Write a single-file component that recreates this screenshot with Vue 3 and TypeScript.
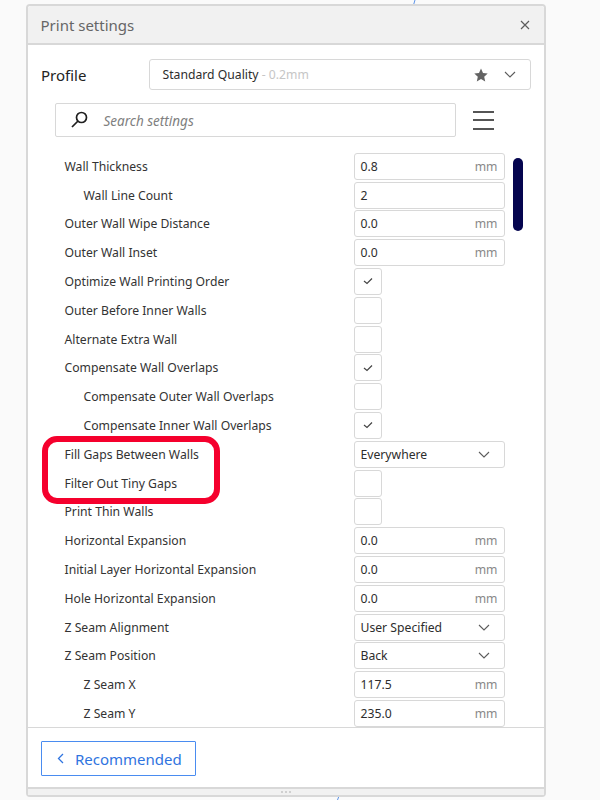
<script setup lang="ts">
interface Row {
  label: string
  indent?: boolean
  kind: 'num' | 'plain' | 'check' | 'select'
  value?: string
  checked?: boolean
}
const rows: Row[] = [
  { label: 'Wall Thickness', kind: 'num', value: '0.8' },
  { label: 'Wall Line Count', indent: true, kind: 'plain', value: '2' },
  { label: 'Outer Wall Wipe Distance', kind: 'num', value: '0.0' },
  { label: 'Outer Wall Inset', kind: 'num', value: '0.0' },
  { label: 'Optimize Wall Printing Order', kind: 'check', checked: true },
  { label: 'Outer Before Inner Walls', kind: 'check' },
  { label: 'Alternate Extra Wall', kind: 'check' },
  { label: 'Compensate Wall Overlaps', kind: 'check', checked: true },
  { label: 'Compensate Outer Wall Overlaps', indent: true, kind: 'check' },
  { label: 'Compensate Inner Wall Overlaps', indent: true, kind: 'check', checked: true },
  { label: 'Fill Gaps Between Walls', kind: 'select', value: 'Everywhere' },
  { label: 'Filter Out Tiny Gaps', kind: 'check' },
  { label: 'Print Thin Walls', kind: 'check' },
  { label: 'Horizontal Expansion', kind: 'num', value: '0.0' },
  { label: 'Initial Layer Horizontal Expansion', kind: 'num', value: '0.0' },
  { label: 'Hole Horizontal Expansion', kind: 'num', value: '0.0' },
  { label: 'Z Seam Alignment', kind: 'select', value: 'User Specified' },
  { label: 'Z Seam Position', kind: 'select', value: 'Back' },
  { label: 'Z Seam X', indent: true, kind: 'num', value: '117.5' },
  { label: 'Z Seam Y', indent: true, kind: 'num', value: '235.0' },
]
</script>

<template>
  <div class="page">
    <svg class="wire" width="600" height="800" viewBox="0 0 600 800">
      <path d="M415 0 L413.500 5" />
      <path d="M339 796 L337.500 800" />
    </svg>
    <section class="panel">
      <header class="head">
        <h1>Print settings</h1>
        <svg width="10" height="10" viewBox="0 0 10 10" class="close">
          <path d="M1 1 L9 9 M9 1 L1 9" />
        </svg>
      </header>

      <div class="body">
        <div class="profile">
          <span class="profile-label">Profile</span>
          <div class="profile-box">
            <span class="profile-name">Standard Quality</span>
            <span class="profile-sub">&nbsp;- 0.2mm</span>
            <svg class="star" width="14" height="14" viewBox="0 0 14 14">
              <path d="M7 .6 L9 5 L13.700 5.500 L10.200 8.700 L11.200 13.400 L7 11 L2.800 13.400 L3.800 8.700 L.3 5.500 L5 5 Z" />
            </svg>
            <svg class="chev" width="12" height="7" viewBox="0 0 12 7">
              <path d="M1 1 L6 6 L11 1" />
            </svg>
          </div>
        </div>

        <div class="search">
          <div class="search-box">
            <svg width="20" height="20" viewBox="0 0 20 20" class="lens">
              <circle cx="11.500" cy="7.500" r="5" />
              <path d="M8 11 L2 17" />
            </svg>
            <span class="placeholder">Search settings</span>
          </div>
          <div class="burger"><i></i><i></i><i></i></div>
        </div>

        <div class="list">
          <div v-for="row in rows" :key="row.label" class="row">
            <span class="label" :class="{ indent: row.indent }">{{ row.label }}</span>
            <div v-if="row.kind === 'check'" class="box check">
              <svg v-if="row.checked" width="10" height="8" viewBox="0 0 10 8">
                <path d="M1 4 L4 6.500 L9 1.500" />
              </svg>
            </div>
            <div v-else class="box field">
              <span>{{ row.value }}</span>
              <span v-if="row.kind === 'num'" class="unit">mm</span>
              <svg v-if="row.kind === 'select'" class="chev small" width="12" height="7" viewBox="0 0 12 7">
                <path d="M1 1 L6 6 L11 1" />
              </svg>
            </div>
          </div>
          <div class="thumb"></div>
        </div>
      </div>

      <footer class="foot">
        <button class="rec" type="button">
          <svg width="7" height="11" viewBox="0 0 7 11">
            <path d="M6 1 L1.500 5.500 L6 10" />
          </svg>
          Recommended
        </button>
      </footer>

      <div class="grip"><i></i><i></i><i></i></div>
    </section>
    <div class="callout"></div>
  </div>
</template>

<style>
html, body { margin: 0; background: #fafafa; }
</style>

<style scoped>
.page {
  position: relative;
  width: 600px;
  height: 800px;
  overflow: hidden;
  box-sizing: border-box;
  padding: 4px 54px 0 26px;
  background: #fafafa;
  font-family: "Noto Sans", "Open Sans", sans-serif;
  color: #2d2d2d;
}
.wire { position: absolute; left: 0; top: 0; }
.wire path { stroke: #5b93e8; stroke-width: 1; fill: none; }
.panel {
  position: relative;
  height: 793px;
  box-sizing: border-box;
  display: flex;
  flex-direction: column;
  background: #fff;
  border: 2px solid #d8d8d8;
  border-radius: 4px;
}
.head {
  height: 39px;
  flex: none;
  box-sizing: border-box;
  display: flex;
  align-items: center;
  justify-content: space-between;
  padding: 0 14px 0 12.500px;
  background: #f1f1f1;
  border-bottom: 2px solid #d8d8d8;
  border-radius: 3px 3px 0 0;
}
.head h1 { margin: 0; font-size: 15px; font-weight: 400; color: #666; }
.close path { stroke: #5c5c5c; stroke-width: 1.200; fill: none; }
.body { flex: 1; min-height: 0; overflow: hidden; }
.profile {
  display: flex;
  align-items: center;
  height: 31px;
  margin: 14px 13px 0 13px;
}
.profile-label { width: 108px; flex: none; font-size: 15px; color: #222; }
.profile-box {
  flex: 1;
  height: 31px;
  box-sizing: border-box;
  display: flex;
  align-items: center;
  padding: 0 14px 0 12.500px;
  border: 1px solid #d8d8d8;
  border-radius: 3px;
  font-size: 12.200px;
}
.profile-sub { color: #c6c6c6; flex: 1; }
.star { margin-right: 16px; }
.star path { fill: #636363; }
.chev path { stroke: #5c5c5c; stroke-width: 1.100; fill: none; }
.search {
  display: flex;
  align-items: center;
  margin: 13px 0 0 27px;
}
.search-box {
  width: 401px;
  height: 34px;
  box-sizing: border-box;
  display: flex;
  align-items: center;
  padding-left: 14px;
  border: 1px solid #d8d8d8;
  border-radius: 2px;
}
.lens { flex: none; }
.lens circle, .lens path { stroke: #1f1f1f; stroke-width: 1.700; fill: none; }
.placeholder { margin-left: 13.500px; padding-top: 2px; font-size: 13.500px; font-style: italic; color: #808080; }
.burger {
  margin-left: 17px;
  width: 21px;
  display: flex;
  flex-direction: column;
  gap: 6.500px;
}
.burger i { display: block; height: 2px; background: #555; }
.list {
  position: relative;
  margin-top: 14.900px;
  padding-left: 36.500px;
}
.row {
  height: 28.8px;
  width: 441px;
  display: flex;
  align-items: center;
  justify-content: space-between;
  font-size: 12.200px;
}
.label { color: #333; }
.indent { margin-left: 19px; }
.box {
  height: 27px;
  box-sizing: border-box;
  display: flex;
  align-items: center;
  background: #fff;
  border: 1px solid #d8d8d8;
  border-radius: 3px;
}
.row > .field { width: 151px; margin-right: 1px; padding: 0 6px; justify-content: space-between; }
.row > .check { width: 28px; margin-right: 124px; justify-content: center; }
.check path { stroke: #444; stroke-width: 1.200; fill: none; }
.unit { color: #888; }
.chev.small { margin-right: 8px; }
.thumb {
  position: absolute;
  left: 485px;
  top: 6px;
  width: 10px;
  height: 73px;
  border-radius: 5px;
  background: #05054f;
}
.foot {
  flex: none;
  height: 60px;
  box-sizing: border-box;
  border-top: 1px solid #d8d8d8;
  padding: 13px 0 0 13px;
  background: #fff;
  position: relative;
}
.rec {
  width: 155px;
  height: 35px;
  display: flex;
  align-items: center;
  gap: 11px;
  padding: 0 0 0 15px;
  background: #fff;
  border: 1px solid #4a8cf0;
  border-radius: 1px;
  color: #2f74e0;
  font: 400 15px "Noto Sans", "Open Sans", sans-serif;
}
.rec path { stroke: #2f74e0; stroke-width: 1.300; fill: none; }
.grip {
  height: 8px;
  flex: none;
  display: flex;
  justify-content: center;
  align-items: center;
  gap: 2px;
  background: #f1f1f1;
  border-top: 2px solid #d8d8d8;
  box-sizing: border-box;
}
.grip i { width: 2px; height: 2px; background: #d0d0d0; }
.callout {
  position: absolute;
  left: 42px;
  top: 436px;
  width: 178px;
  height: 68px;
  box-sizing: border-box;
  border: 6px solid #f5002d;
  border-radius: 15px;
}
</style>
